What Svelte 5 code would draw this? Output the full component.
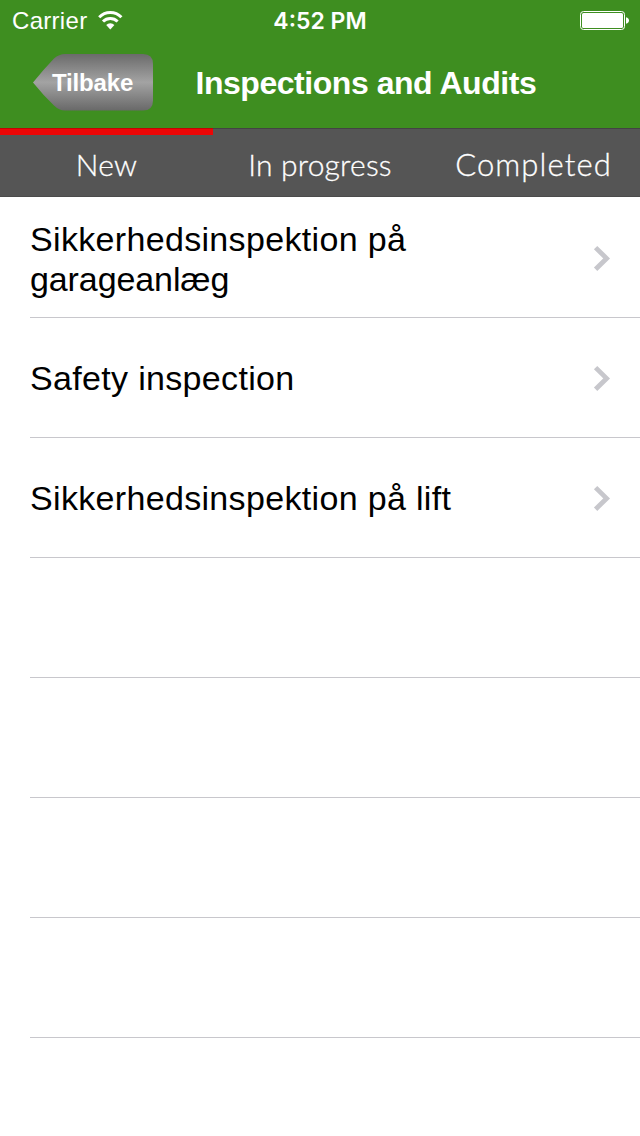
<script lang="ts">
const tabs = ["New", "In progress", "Completed"];
const rows: string[][] = [
	["Sikkerhedsinspektion på", "garageanlæg"],
	["Safety inspection"],
	["Sikkerhedsinspektion på lift"],
	[],
	[],
	[],
	[],
];

let activeTab = $state(0);
</script>

<div class="screen">
	<header>
		<div class="status">
			<div class="carrier">
				<span>Carrier</span>
				<svg width="26" height="20" viewBox="0 0 26 20">
					<path d="M2.2 6.2a15.500 15.500 0 0 1 22.2 0" />
					<path d="M6 10.500a10.300 10.300 0 0 1 14.600 0" />
					<path class="dot" d="M9.200 14a5.700 5.700 0 0 1 8.200 0L13.300 18.400z" />
				</svg>
			</div>
			<span class="time">4:52 PM</span>
			<svg class="battery" width="50" height="20" viewBox="0 0 50 20">
				<rect class="shell" x="0.5" y="0.5" width="44" height="18" rx="3" />
				<rect class="fill" x="2" y="2" width="41" height="15" rx="1.5" />
				<path class="fill" d="M46 6.2c4 .8 4 5.800 0 6.600z" />
			</svg>
		</div>
		<div class="navbar">
			<button class="back">
				<svg width="122" height="58" viewBox="0 0 122 58">
					<defs>
						<linearGradient id="metal" x1="0" y1="0" x2="0" y2="1">
							<stop offset="0" stop-color="#6b6b6b" />
							<stop offset="0.5" stop-color="#a3a3a3" />
							<stop offset="1" stop-color="#696969" />
						</linearGradient>
					</defs>
					<path
						fill="url(#metal)"
						d="M1 28.500Q11 16 22 4.500Q27 0 33 0H111Q121 0 121 10V46.500Q121 56.500 111 56.500H33Q27 56.500 22 51.500Q11 41 1 28.500z"
					/>
				</svg>
				<span>Tilbake</span>
			</button>
			<h1>Inspections and Audits</h1>
		</div>
	</header>

	<nav>
		{#each tabs as tab, i}
			<button
				class:active={activeTab === i}
				class:last={i === tabs.length - 1}
				onclick={() => (activeTab = i)}
			>
				{tab}
			</button>
		{/each}
	</nav>

	<ul>
		{#each rows as lines}
			<li>
				{#if lines.length > 0}
					<div class="title" class:double={lines.length > 1}>
						{#each lines as line, i}
							<div class:wrapped={i > 0}>{line}</div>
						{/each}
					</div>
					<svg width="18" height="26" viewBox="0 0 18 26">
						<path d="M2.600 2.600L13.600 13.400L2.600 24.200" />
					</svg>
				{/if}
			</li>
		{/each}
	</ul>
</div>

<style>
	:global(body) {
		background: #fff;
	}

	.screen {
		width: 640px;
		height: 1136px;
		overflow: hidden;
		font-family: "Liberation Sans", Arial, sans-serif;
		background: #fff;
	}

	header {
		height: 128px;
		color: #fff;
		background: #3e8e20;
	}

	.status {
		display: grid;
		grid-template-columns: 1fr auto 1fr;
		align-items: center;
		box-sizing: border-box;
		height: 40px;
		padding: 1px 10px 0 12px;
		font-size: 24px;
	}

	.carrier {
		display: flex;
		align-items: center;
		gap: 10px;
		letter-spacing: 0.3px;
	}

	.carrier path {
		fill: none;
		stroke: #fff;
		stroke-width: 3;
	}

	.carrier path.dot {
		fill: #fff;
		stroke: none;
	}

	.time {
		padding-right: 2px;
		font-family: Inter, sans-serif;
		font-size: 23px;
		font-weight: 600;
	}

	.battery {
		justify-self: end;
		margin-top: 1px;
	}

	.shell {
		fill: none;
		stroke: #fff;
	}

	.fill {
		fill: #fff;
	}

	.navbar {
		display: flex;
		align-items: center;
		height: 86px;
		padding-left: 32px;
	}

	button {
		padding: 0;
		border: 0;
		color: #fff;
		background: none;
		font: inherit;
	}

	.back {
		display: grid;
		width: 122px;
		height: 58px;
	}

	.back svg,
	.back span {
		grid-area: 1 / 1;
	}

	.back span {
		align-self: center;
		padding-left: 20px;
		font-size: 24px;
		font-weight: 700;
		letter-spacing: -0.15px;
		text-align: left;
	}

	h1 {
		margin: 0 0 0 41.500px;
		font-size: 32px;
		font-weight: 700;
		letter-spacing: -0.46px;
		white-space: nowrap;
	}

	nav {
		display: grid;
		grid-template-columns: 213px 214px 213px;
		box-sizing: border-box;
		height: 69px;
		border-bottom: 1px solid #4b4b4b;
		background: #555;
		box-shadow: inset 0 1px #434343;
	}

	nav button {
		padding-bottom: 4px;
		border-top: 7px solid transparent;
		font-family: Lato, sans-serif;
		font-size: 30px;
		font-weight: 300;
		letter-spacing: 0.2px;
		-webkit-text-stroke: 0.3px #fff;
	}

	nav button.active {
		background: linear-gradient(#c00404 1px, #ec0606 1px, #ec0606 7px, transparent 7px) border-box;
	}

	nav button.last {
		font-size: 31px;
		letter-spacing: 1.100px;
	}

	ul {
		margin: 0;
		padding: 1px 0 0 30px;
		list-style: none;
	}

	li {
		display: flex;
		align-items: center;
		justify-content: space-between;
		box-sizing: border-box;
		height: 120px;
		padding: 1px 29px 0 0;
		border-bottom: 1px solid #c8c7cc;
	}

	.title {
		font-size: 34px;
		line-height: 40px;
		letter-spacing: 0.33px;
	}

	.title.double {
		padding-top: 2px;
	}

	.title .wrapped {
		letter-spacing: -0.1px;
	}

	li path {
		fill: none;
		stroke: #c7c7cc;
		stroke-width: 4.800;
	}
</style>
